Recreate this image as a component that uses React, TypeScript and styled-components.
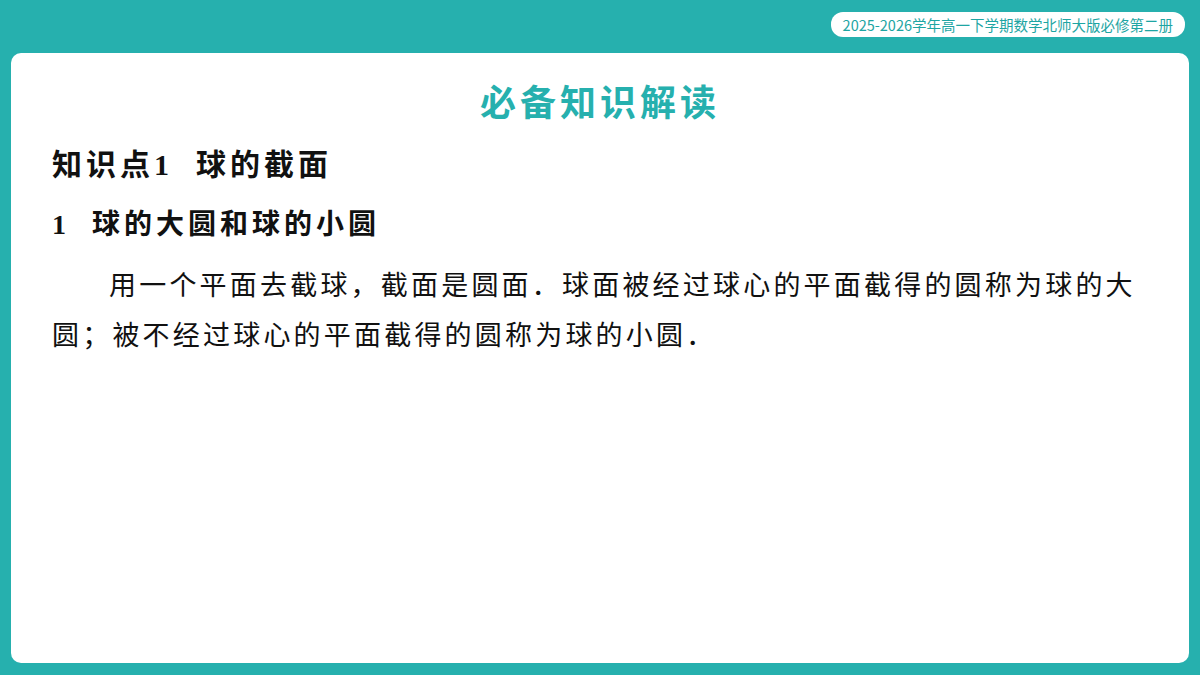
import React from "react";
import styled, { createGlobalStyle } from "styled-components";

const G = createGlobalStyle`
  html,body{margin:0;padding:0;}
  body{width:1200px;height:675px;overflow:hidden;background:#26b0ae;font-family:"Liberation Serif","Noto Serif CJK SC","Noto Sans CJK SC",serif;}
`;
const Page = styled.div`
  width:1200px;height:675px;box-sizing:border-box;display:flex;flex-direction:column;
  padding:12px 11px 12px 11px;background:#26b0ae;
`;
const Top = styled.div`display:flex;justify-content:flex-end;height:41px;`;
const Badge = styled.div`
  height:25px;box-sizing:border-box;padding:0 12px;background:#fff;border-radius:12px;
  display:flex;align-items:center;color:#1ea5a3;font-size:14.5px;
  font-family:"Noto Sans CJK SC",sans-serif;margin-right:4px;
`;
const Panel = styled.div`
  flex:1;background:#fff;border-radius:10px;padding:22px 41px 0 41px;
  display:flex;flex-direction:column;
`;
const Title = styled.div`
  text-align:center;color:#26b0ae;font-size:36px;font-weight:bold;letter-spacing:4px;
  font-family:"Noto Sans CJK SC",sans-serif;line-height:50px;
`;
const H1 = styled.div`
  font-size:30px;font-weight:bold;color:#111;margin-top:18px;line-height:44px;letter-spacing:4px;
  font-family:"Liberation Serif","Noto Sans CJK SC",serif;
`;
const H2 = styled.div`
  font-size:28px;font-weight:bold;color:#111;margin-top:16px;line-height:44px;letter-spacing:4px;
  font-family:"Liberation Serif","Noto Sans CJK SC",serif;
`;
const P = styled.p`
  margin:12px 0 0;font-size:27px;line-height:50px;text-indent:57px;color:#111;letter-spacing:3.2px;
  font-family:"Noto Sans CJK SC",sans-serif;width:1110px;
`;

export default function App(){
  return (<>
    <G/>
    <Page>
      <Top><Badge>2025-2026学年高一下学期数学北师大版必修第二册</Badge></Top>
      <Panel>
        <Title>必备知识解读</Title>
        <H1>知识点1&nbsp; 球的截面</H1>
        <H2>1&nbsp; 球的大圆和球的小圆</H2>
        <P>用一个平面去截球，截面是圆面．球面被经过球心的平面截得的圆称为球的大圆；被不经过球心的平面截得的圆称为球的小圆．</P>
      </Panel>
    </Page>
  </>);
}
